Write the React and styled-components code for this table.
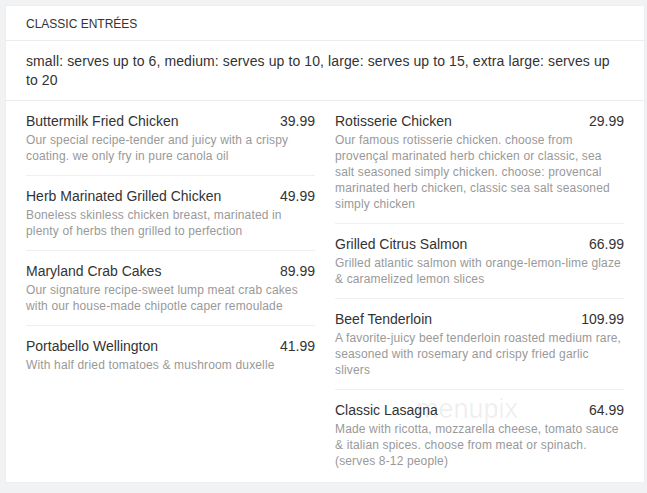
import React from 'react'
import styled, { createGlobalStyle } from 'styled-components'

const GlobalStyle = createGlobalStyle`
  * { box-sizing: border-box; }
  body {
    margin: 0;
    background: #f1f2f4;
    font-family: "Liberation Sans", Arial, sans-serif;
  }
`

const Page = styled.div`
  padding: 5px 3px 11px 5px;
`

const Card = styled.section`
  position: relative;
  background: #fff;
  border: 1px solid #eceef0;
  width: 640px;
`

const Header = styled.div`
  height: 35px;
  padding: 1px 20px 0;
  display: flex;
  align-items: center;
  font-size: 12px;
  color: #333;
  text-transform: uppercase;
  border-bottom: 1px solid #ececec;
`

const Note = styled.p`
  margin: 0;
  padding: 11px 20px 10px;
  font-size: 14px;
  line-height: 19px;
  letter-spacing: 0.1px;
  color: #333;
  border-bottom: 1px solid #ececec;
`

const Columns = styled.div`
  display: grid;
  grid-template-columns: 1fr 1fr;
  column-gap: 20px;
  padding: 0 20px 1px;
  align-items: start;
`

const Column = styled.div`
  display: flex;
  flex-direction: column;
`

const Item = styled.div`
  padding: 10px 0 11px;
  border-bottom: 1px solid ${p => (p.$last ? 'transparent' : '#efefef')};
`

const ItemHead = styled.div`
  display: flex;
  justify-content: space-between;
  font-size: 14px;
  line-height: 20px;
  color: #333;
`

const Desc = styled.div`
  margin-top: 1px;
  font-size: 12px;
  line-height: 16px;
  letter-spacing: 0.15px;
  color: #999;
`

const Watermark = styled.div`
  position: absolute;
  left: 410px;
  top: 390px;
  font-size: 27px;
  line-height: 1;
  color: rgba(0, 0, 0, 0.08);
  pointer-events: none;
`

const left = [
  { name: 'Buttermilk Fried Chicken', price: '39.99', desc: 'Our special recipe-tender and juicy with a crispy coating. we only fry in pure canola oil' },
  { name: 'Herb Marinated Grilled Chicken', price: '49.99', desc: 'Boneless skinless chicken breast, marinated in plenty of herbs then grilled to perfection' },
  { name: 'Maryland Crab Cakes', price: '89.99', desc: 'Our signature recipe-sweet lump meat crab cakes with our house-made chipotle caper remoulade' },
  { name: 'Portabello Wellington', price: '41.99', desc: 'With half dried tomatoes & mushroom duxelle' },
]

const right = [
  { name: 'Rotisserie Chicken', price: '29.99', desc: 'Our famous rotisserie chicken. choose from provençal marinated herb chicken or classic, sea salt seasoned simply chicken. choose: provencal marinated herb chicken, classic sea salt seasoned simply chicken' },
  { name: 'Grilled Citrus Salmon', price: '66.99', desc: 'Grilled atlantic salmon with orange-lemon-lime glaze & caramelized lemon slices' },
  { name: 'Beef Tenderloin', price: '109.99', desc: 'A favorite-juicy beef tenderloin roasted medium rare, seasoned with rosemary and crispy fried garlic slivers' },
  { name: 'Classic Lasagna', price: '64.99', desc: 'Made with ricotta, mozzarella cheese, tomato sauce & italian spices. choose from meat or spinach. (serves 8-12 people)' },
]

function List({ items }) {
  return (
    <Column>
      {items.map((it, i) => (
        <Item key={it.name} $last={i === items.length - 1}>
          <ItemHead>
            <span>{it.name}</span>
            <span>{it.price}</span>
          </ItemHead>
          <Desc>{it.desc}</Desc>
        </Item>
      ))}
    </Column>
  )
}

export default function App() {
  return (
    <Page>
      <GlobalStyle />
      <Card>
        <Header>Classic Entrées</Header>
        <Note>small: serves up to 6, medium: serves up to 10, large: serves up to 15, extra large: serves up to 20</Note>
        <Columns>
          <List items={left} />
          <List items={right} />
        </Columns>
        <Watermark>menupix</Watermark>
      </Card>
    </Page>
  )
}
